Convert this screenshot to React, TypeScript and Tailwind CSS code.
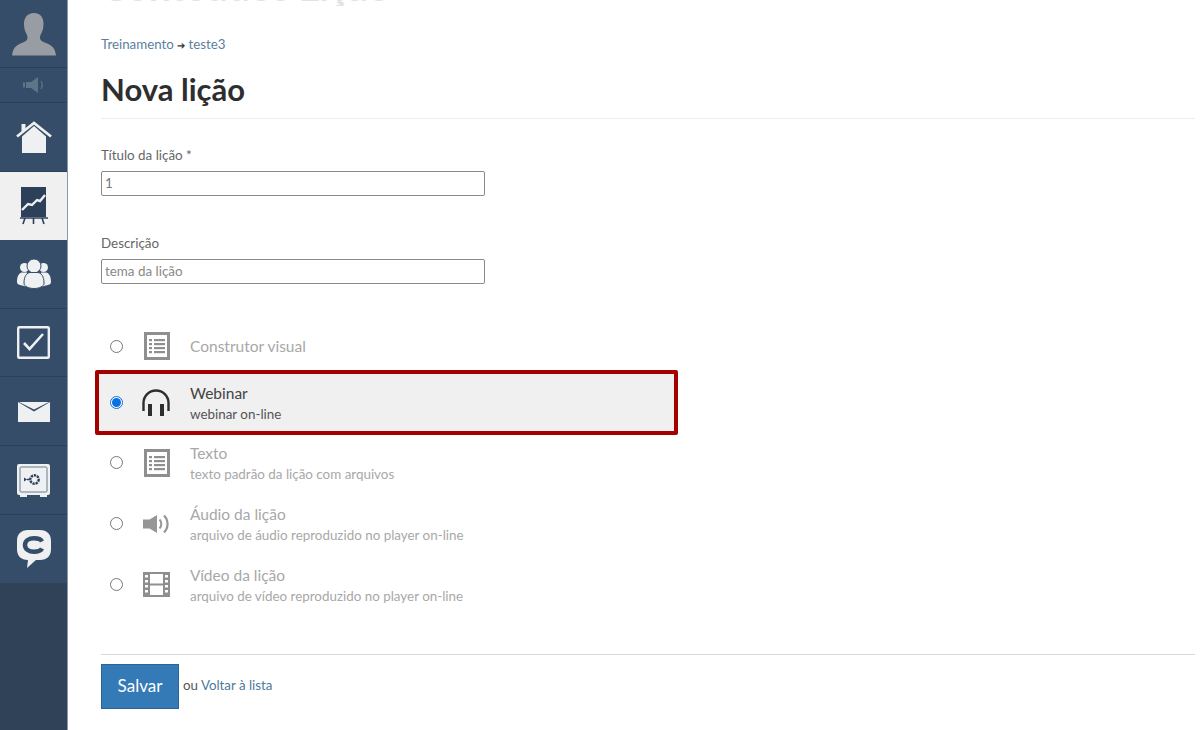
import React from "react";

function ListIcon() {
  return (
    <svg width="26" height="28" viewBox="0 0 26 28" fill="none">
      <rect x="1.5" y="1.5" width="23" height="25" fill="none" stroke="#8f8f8f" strokeWidth="3" />
      <g fill="#8f8f8f">
        <rect x="5" y="7" width="3" height="2.2" /><rect x="10" y="7" width="11" height="2.2" />
        <rect x="5" y="11" width="3" height="2.2" /><rect x="10" y="11" width="11" height="2.2" />
        <rect x="5" y="15" width="3" height="2.2" /><rect x="10" y="15" width="11" height="2.2" />
        <rect x="5" y="19" width="3" height="2.2" /><rect x="10" y="19" width="11" height="2.2" />
      </g>
    </svg>
  );
}

function HeadphonesIcon() {
  return (
    <svg width="28" height="27" viewBox="0 0 28 27" fill="none">
      <path d="M1.500 22V14a12.500 12.500 0 0 1 25 0V22" stroke="#2e2e2e" strokeWidth="2.400" />
      <rect x="6" y="15" width="4" height="12" fill="#2e2e2e" />
      <rect x="18" y="15" width="4" height="12" fill="#2e2e2e" />
    </svg>
  );
}

function AudioIcon() {
  return (
    <svg width="27" height="20" viewBox="0 0 27 20" fill="none">
      <path d="M0 5.500h6.500L14 1v18l-7.500-4.500H0z" fill="#969696" />
      <path d="M16.500 5.500a6.500 6.500 0 0 1 0 9" stroke="#969696" strokeWidth="2" />
      <path d="M21 1.500a12 12 0 0 1 0 17" stroke="#969696" strokeWidth="2.200" />
    </svg>
  );
}

function FilmIcon() {
  return (
    <svg width="27" height="25" viewBox="0 0 27 25">
      <path fillRule="evenodd" fill="#8f8f8f" d="M0 0h27v25H0zM7 2v9.500h13V2zM7 13.500V23h13v-9.500zM2 3v2.500h3V3zM2 8v2.500h3V8zM2 13v2.500h3V13zM2 18v2.500h3V18zM22 3v2.500h3V3zM22 8v2.500h3V8zM22 13v2.500h3V13zM22 18v2.500h3V18z" />
    </svg>
  );
}

function Radio({ checked }: { checked?: boolean }) {
  return checked ? (
    <span className="-mt-[1px] flex h-[13px] w-[13px] shrink-0 items-center justify-center rounded-full border border-[#0a6fe0] bg-white">
      <span className="block h-[9px] w-[9px] rounded-full bg-[#0a6fe0]" />
    </span>
  ) : (
    <span className="block h-[13px] w-[13px] shrink-0 rounded-full border border-[#767676] bg-white" />
  );
}

function Option({ icon, title, sub, active }: { icon: React.ReactNode; title: string; sub?: string; active?: boolean }) {
  const rowClass = active
    ? "-mx-[6px] -mt-[1px] -mb-[3px] h-[65px] w-[583px] rounded-[2px] border-[4px] border-[#a30000] bg-[#f0f0f0] pl-[11px]"
    : sub
    ? "h-[61px] w-[573px] pl-[9px]"
    : "h-[50px] w-[573px] pl-[9px]";
  return (
    <div className={"flex items-center " + rowClass}>
      <Radio checked={active} />
      <span className={"flex w-[67px] shrink-0 justify-center " + (active ? "-mt-[1px] pr-[2px]" : "")}>{icon}</span>
      <div className={sub ? "-mt-[1px]" : ""}>
        <div className={"text-[15.500px] leading-[22px] " + (active ? "text-[#444]" : "text-[#a8a8a8]")}>{title}</div>
        {sub && <div className={"mt-[1px] text-[13.400px] leading-[18px] " + (active ? "text-[#555]" : "text-[#a8a8a8]")}>{sub}</div>}
      </div>
    </div>
  );
}

function SideItem({ children, h, active, noLine }: { children: React.ReactNode; h: string; active?: boolean; noLine?: boolean }) {
  return (
    <div className={h + " flex items-center justify-center " + (active ? "bg-[#f0f0f0]" : noLine ? "" : "border-b border-[#2b4059]")}>
      {children}
    </div>
  );
}

const W = "#eef0f1";

export default function App() {
  return (
    <div className="flex h-[730px] w-[1200px] overflow-hidden bg-white text-[#333]" style={{ fontFamily: 'Lato, "Liberation Sans", sans-serif' }}>
      <aside className="flex h-full w-[68px] shrink-0 flex-col border-r border-[#8b98a6] bg-[#354d68]">
        <SideItem h="h-[68px]">
          <svg width="46" height="44" viewBox="0 0 46 44">
            <path fill="#979da3" d="M23 1c7 0 9.500 5 9.500 11 0 3-.5 6-1.800 8.500-.8 1.700-1.700 3-1.700 5 0 2 1 3.500 4 4.800C38 32 44 34 45 43.500H1C2 34 8 32 12.500 30.300c3-1.300 4-2.800 4-4.800 0-2-.9-3.300-1.700-5C13.500 18 13 15 13 12 13 6 16 1 23 1z" />
          </svg>
        </SideItem>
        <SideItem h="h-[35px]">
          <svg width="22" height="16" viewBox="0 0 22 16">
            <path fill="#5d7489" d="M0 5.500h2v5H0zM3 5h5l7-5v16l-7-5H3z" />
            <path fill="none" stroke="#5d7489" strokeWidth="1.300" d="M18 4c1.500 2.500 1.500 5.500 0 8" />
          </svg>
        </SideItem>
        <SideItem h="h-[69px]">
          <svg width="36" height="32" viewBox="0 0 36 32">
            <path fill={W} d="M6 32V15.500L18 5l12 10.500V32z" />
            <path fill="none" stroke={W} strokeWidth="2.600" d="M1 15.500 18 2l17 13.500" />
            <path fill={W} d="M5.500 3h4v5l-4 3.500z" />
          </svg>
        </SideItem>
        <SideItem h="h-[68px]" active>
          <svg width="28" height="38" viewBox="0 0 28 38">
            <rect x="1" y="0" width="25" height="30" fill="#2c4159" />
            <path fill="none" stroke="#eef0f1" strokeWidth="2.400" d="M2 23l6-6 4 1 5-5 3 1 5-6" />
            <path fill="none" stroke="#2c4159" strokeWidth="1.600" d="M0 31h28M3 37l2-6M13.500 37v-6M24 37l-2-6" />
          </svg>
        </SideItem>
        <SideItem h="h-[69px]">
          <svg width="34" height="30" viewBox="0 0 34 30">
            <circle cx="7.500" cy="8.500" r="4.500" fill={W} />
            <circle cx="26.500" cy="8.500" r="4.500" fill={W} />
            <path fill={W} d="M0 23c0-6 2-9 5-9.500h5l-1 14-6-1.500c-2-.5-3-1.500-3-3zM34 23c0-6-2-9-5-9.500h-5l1 14 6-1.500c2-.5 3-1.500 3-3z" />
            <circle cx="17" cy="7" r="7" fill={W} stroke="#354d68" strokeWidth="1" />
            <path fill={W} stroke="#354d68" strokeWidth="1" d="M7 24c0-7 3-10 6-10.500h8c3 .5 6 3.500 6 10.500 0 2-1 3-3 4-4 2-10 2-14 0-2-1-3-2-3-4z" />
          </svg>
        </SideItem>
        <SideItem h="h-[68px]">
          <svg width="33" height="33" viewBox="0 0 33 33">
            <rect x="1.200" y="1.200" width="30.600" height="30.600" rx="1" fill="none" stroke={W} strokeWidth="2.400" />
            <path fill="none" stroke={W} strokeWidth="2.600" d="M7 17l5.500 6L26 8" />
          </svg>
        </SideItem>
        <SideItem h="h-[69px]">
          <svg className="mt-[2px]" width="32" height="20" viewBox="0 0 32 20">
            <path fill={W} d="M0 0l16 9.500L32 0v20H0z" />
            <path fill={W} d="M1 0h30L16 7.500z" />
          </svg>
        </SideItem>
        <SideItem h="h-[69px]">
          <svg width="33" height="33" viewBox="0 0 33 33">
            <rect x="0" y="0" width="33" height="31" rx="2" fill={W} />
            <rect x="3" y="3" width="27" height="25" rx="1" fill={W} stroke="#6b7c8d" strokeWidth="1" />
            <rect x="3" y="30" width="7" height="3" fill={W} />
            <rect x="23" y="30" width="7" height="3" fill={W} />
            <circle cx="17.500" cy="15.500" r="4.200" fill={W} stroke="#2c4159" strokeWidth="2.400" strokeDasharray="2.300 0.800" />
            <path fill="#2c4159" d="M7 13.500l3 2-3 2zM10 14.800h3v1.400h-3z" />
          </svg>
        </SideItem>
        <SideItem h="h-[68px]" noLine>
          <svg width="34" height="38" viewBox="0 0 34 38">
            <path fill={W} d="M11 0h12c7 0 11 4 11 11v8c0 7-4 11-11 11h-4l-9 8 1-8C4 30 0 26 0 19v-8C0 4 4 0 11 0z" />
            <path fill="none" stroke="#354d68" strokeWidth="4.500" d="M25 11.500c-1-2-4-3.200-8-3.200-5 0-9 2.500-9 6.700s4 6.700 9 6.700c4 0 7-1.200 8-3.200" />
          </svg>
        </SideItem>
        <div className="flex-1 bg-[#2f4257]" />
      </aside>

      <main className="min-w-0 flex-1 pl-[33px] pr-[5px]">
        <div className="-mt-[34px] h-[40px] overflow-hidden whitespace-nowrap text-[39px] font-bold leading-[40px] text-[#e2e2e2]">Conteúdos Lição</div>
        <div className="mt-[30px] text-[13.300px] leading-[16px] text-[#5c7f9e]">
          Treinamento <span className="text-[10px] text-[#333]">➔</span> teste3
        </div>
        <h1 className="mt-[17px] border-b border-[#eeeeee] pb-[10px] text-[31px] font-bold leading-[38px] text-[#2e2e2e]">Nova lição</h1>

        <label className="mt-[27px] block text-[13.400px] leading-[18px] text-[#666]">Título da lição *</label>
        <div className="mt-[7px] flex h-[25px] w-[384px] items-center rounded-[2px] border border-[#8a8a8a] px-[3px] text-[13.400px] text-[#777]">1</div>

        <label className="mt-[38px] block text-[13.400px] leading-[18px] text-[#666]">Descrição</label>
        <div className="mt-[7px] flex h-[25px] w-[384px] items-center rounded-[2px] border border-[#8a8a8a] px-[3px] text-[13.400px] text-[#888]">tema da lição</div>

        <div className="mt-[37px] flex flex-col">
          <Option icon={<ListIcon />} title="Construtor visual" />
          <Option icon={<HeadphonesIcon />} title="Webinar" sub="webinar on-line" active />
          <Option icon={<ListIcon />} title="Texto" sub="texto padrão da lição com arquivos" />
          <Option icon={<AudioIcon />} title="Áudio da lição" sub="arquivo de áudio reproduzido no player on-line" />
          <Option icon={<FilmIcon />} title="Vídeo da lição" sub="arquivo de vídeo reproduzido no player on-line" />
        </div>

        <div className="mt-[39px] flex items-center border-t border-[#d9d9d9] pt-[9px]">
          <button className="h-[45px] w-[78px] border border-[#2a6496] bg-[#337ab7] pb-[2px] text-[17px] text-white">Salvar</button>
          <span className="ml-[4px] -mt-[2px] text-[13.300px] text-[#555]">
            ou <span className="text-[#4d7a9c]">Voltar à lista</span>
          </span>
        </div>
      </main>
    </div>
  );
}
